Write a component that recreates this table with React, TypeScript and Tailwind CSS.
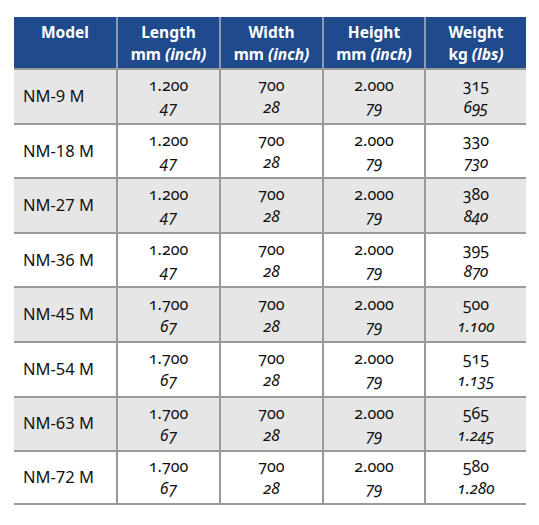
const rows = [
  { model: "NM-9 M", len: ["1.200", "47"], wt: ["315", "695"] },
  { model: "NM-18 M", len: ["1.200", "47"], wt: ["330", "730"] },
  { model: "NM-27 M", len: ["1.200", "47"], wt: ["380", "840"] },
  { model: "NM-36 M", len: ["1.200", "47"], wt: ["395", "870"] },
  { model: "NM-45 M", len: ["1.700", "67"], wt: ["500", "1.100"] },
  { model: "NM-54 M", len: ["1.700", "67"], wt: ["515", "1.135"] },
  { model: "NM-63 M", len: ["1.700", "67"], wt: ["565", "1.245"] },
  { model: "NM-72 M", len: ["1.700", "67"], wt: ["580", "1.280"] },
];

function Pair({ top, bottom }: { top: string; bottom: string }) {
  return (
    <div className="flex flex-col items-center justify-center h-full leading-[22px] text-[16px] oldstyle-nums">
      <span>{top}</span>
      <span className="italic">{bottom}</span>
    </div>
  );
}

export default function App() {
  const cols = "grid grid-cols-[102px_103px_103px_102px_102px]";
  return (
    <div className="w-[539px] h-[525px] bg-white pt-[17px] pl-[14px] font-['Noto_Sans',sans-serif] text-[15px] text-[#111]">
      <div className="w-[512px]">
        <div className={`${cols} bg-[#1f4a8c] text-white font-bold h-[51px] leading-[22px] text-[15.5px]`}>
          <div className="text-center pt-[4px]">Model</div>
          {[
            ["Length", "mm", "(inch)"],
            ["Width", "mm", "(inch)"],
            ["Height", "mm", "(inch)"],
            ["Weight", "kg", "(lbs)"],
          ].map(([a, b, c]) => (
            <div key={a} className="text-center pt-[4px] border-l-2 border-[#8c9bb3]">
              <div>{a}</div>
              <div>
                {b} <span className="italic">{c}</span>
              </div>
            </div>
          ))}
        </div>
        {rows.map((r, i) => (
          <div
            key={r.model}
            className={`${cols} h-[54.6px] border-t-2 border-[#9a9a9a] ${i % 2 === 0 ? "bg-[#e6e6e6]" : "bg-white"} ${i === rows.length - 1 ? "border-b-2" : ""}`}
          >
            <div className="flex items-center pl-[9px] text-[16.5px]">{r.model}</div>
            <div className="border-l-2 border-[#9a9a9a]">
              <Pair top={r.len[0]} bottom={r.len[1]} />
            </div>
            <div className="border-l-2 border-[#9a9a9a]">
              <Pair top="700" bottom="28" />
            </div>
            <div className="border-l-2 border-[#9a9a9a]">
              <Pair top="2.000" bottom="79" />
            </div>
            <div className="border-l-2 border-[#9a9a9a]">
              <Pair top={r.wt[0]} bottom={r.wt[1]} />
            </div>
          </div>
        ))}
      </div>
    </div>
  );
}
